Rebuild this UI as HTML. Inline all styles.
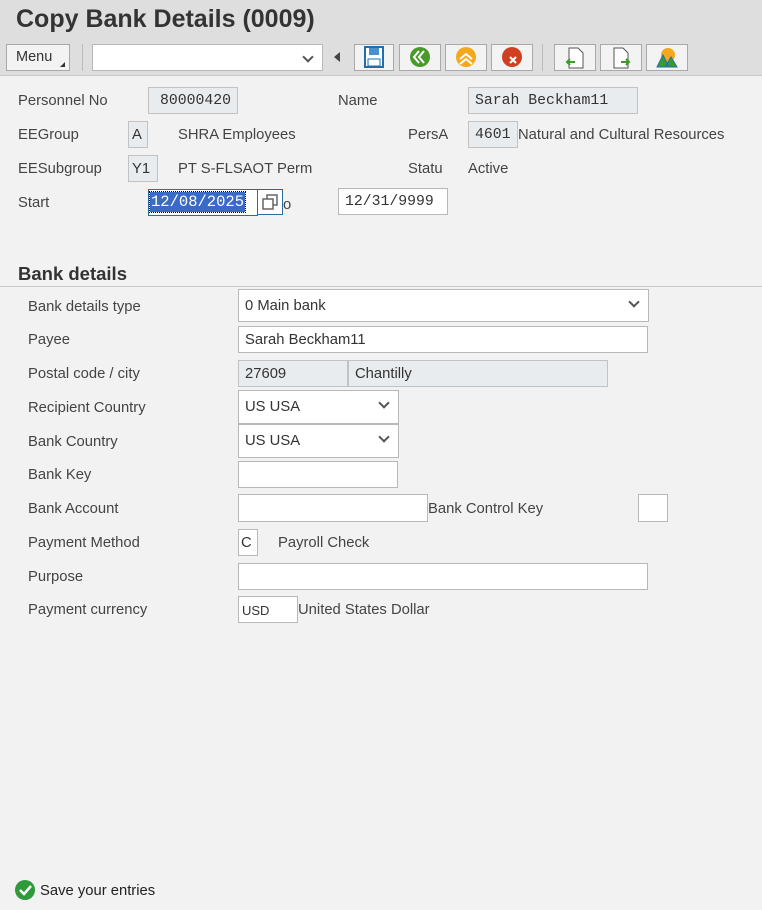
<!DOCTYPE html>
<html><head><meta charset="utf-8"><style>
*{box-sizing:border-box;margin:0;padding:0}
body{width:762px;height:910px;background:#f2f2f2;font-family:"Liberation Sans",Arial,sans-serif;font-size:14.8px;color:#333;position:relative;overflow:hidden}
.a{position:absolute}
.hdr{left:0;top:0;width:762px;height:76px;background:#dedede;border-bottom:1px solid #c8c8c8}
.t{left:16px;top:5px;font-size:25px;font-weight:bold;color:#333}
.btn{background:#f3f3f3;border:1px solid #a9a9a9;height:27px;top:44px}
.in{background:#fff;border:1px solid #b8b8b8;height:27px;padding:5px 6px;font-size:14.8px}
.ro{background:#e9ecee;border:1px solid #c2c2c2;height:27px;padding:5px 6px;font-size:14.8px}
.mono{font-family:"Liberation Mono",monospace}
.lbl{font-size:14.8px;color:#444}
.dd::after{content:"";position:absolute;right:10px;top:8px;width:6px;height:6px;border-right:2px solid #555;border-bottom:2px solid #555;transform:rotate(45deg)}
</style></head><body>
<div class="a hdr"></div>
<div class="a t">Copy Bank Details (0009)</div>
<div class="a btn" style="left:6px;width:64px;padding:4px 9px;font-size:14.5px">Menu<span style="position:absolute;right:4px;bottom:3px;border-left:5px solid transparent;border-bottom:5px solid #333"></span></div>
<div class="a" style="left:82px;top:44px;width:1px;height:27px;background:#bbb"></div>
<div class="a in dd" style="left:92px;top:44px;width:231px;height:27px"></div>
<div class="a" style="left:334px;top:52px;border-right:6px solid #444;border-top:5px solid transparent;border-bottom:5px solid transparent"></div>
<div class="a btn" style="left:354px;width:40px"><svg width="38" height="25"><rect x="10" y="2" width="18" height="20" fill="#fff" stroke="#1f6fb0" stroke-width="2"/><rect x="14" y="3" width="10" height="7" fill="#4a90d0"/><rect x="13" y="14" width="12" height="7" fill="#fff" stroke="#1f6fb0"/></svg></div>
<div class="a btn" style="left:399px;width:42px"><svg width="40" height="25"><circle cx="20" cy="12" r="10" fill="#4a9a2a"/><path d="M24 6l-5 6 5 6M19 6l-5 6 5 6" stroke="#fff" stroke-width="2" fill="none"/></svg></div>
<div class="a btn" style="left:445px;width:42px"><svg width="40" height="25"><circle cx="20" cy="12" r="10" fill="#f4a81d"/><path d="M14 14l6-5 6 5M14 19l6-5 6 5" stroke="#fff" stroke-width="2" fill="none"/></svg></div>
<div class="a btn" style="left:491px;width:42px"><svg width="40" height="25"><circle cx="20" cy="12" r="10" fill="#d04020"/><path d="M18 12l6 6M24 12l-6 6" stroke="#fff" stroke-width="2"/></svg></div>
<div class="a" style="left:542px;top:44px;width:1px;height:27px;background:#bbb"></div>
<div class="a btn" style="left:554px;width:42px"><svg width="40" height="25"><path d="M14 3h9l5 5v15H14z" fill="#fff" stroke="#555"/><path d="M20 17h-8M15 14l-3 3 3 3" stroke="#3a9a2a" stroke-width="2" fill="none"/></svg></div>
<div class="a btn" style="left:600px;width:42px"><svg width="40" height="25"><path d="M13 3h9l5 5v15H13z" fill="#fff" stroke="#555"/><path d="M20 17h8M25 14l3 3-3 3" stroke="#3a9a2a" stroke-width="2" fill="none"/></svg></div>
<div class="a btn" style="left:646px;width:42px"><svg width="40" height="25"><circle cx="21" cy="10" r="7" fill="#f4a81d"/><path d="M10 22l6-12 6 12zM18 22l6-10 6 10z" fill="#3a9a2a" stroke="#1f6fb0"/></svg></div>

<div class="a lbl" style="left:18px;top:93px">Personnel No</div>
<div class="a ro mono" style="left:148px;top:87px;width:90px;text-align:right">80000420</div>
<div class="a lbl" style="left:338px;top:93px">Name</div>
<div class="a ro mono" style="left:468px;top:87px;width:170px">Sarah Beckham11</div>

<div class="a lbl" style="left:18px;top:127px">EEGroup</div>
<div class="a ro" style="left:128px;top:121px;width:20px;padding:5px 3px">A</div>
<div class="a lbl" style="left:178px;top:127px">SHRA Employees</div>
<div class="a lbl" style="left:408px;top:127px">PersA</div>
<div class="a ro mono" style="left:468px;top:121px;width:50px">4601</div>
<div class="a lbl" style="left:518px;top:127px">Natural and Cultural Resources</div>

<div class="a lbl" style="left:18px;top:161px">EESubgroup</div>
<div class="a ro" style="left:128px;top:155px;width:30px;padding:5px 3px">Y1</div>
<div class="a lbl" style="left:178px;top:161px">PT S-FLSAOT Perm</div>
<div class="a lbl" style="left:408px;top:161px">Statu</div>
<div class="a lbl" style="left:468px;top:161px">Active</div>

<div class="a lbl" style="left:18px;top:195px">Start</div>
<div class="a in mono" style="left:148px;top:189px;width:110px;border:1px solid #2a6aa0;padding:3px 1px"><span style="background:#3a6ac8;color:#fff;outline:1px dotted #000;font-size:15.5px;padding:1px 1px">12/08/2025</span></div>
<div class="a" style="left:257px;top:189px;width:26px;height:26px;border:1px solid #2a6aa0;background:#fff"><svg width="24" height="24"><rect x="5" y="9" width="10" height="10" fill="none" stroke="#666" stroke-width="1.5"/><path d="M9 9V5h10v10h-4" fill="none" stroke="#666" stroke-width="1.5"/></svg></div>
<div class="a lbl" style="left:283px;top:197px">o</div>
<div class="a in mono" style="left:338px;top:188px;width:110px">12/31/9999</div>

<div class="a" style="left:18px;top:263px;font-size:18.5px;font-weight:bold;color:#333">Bank details</div>
<div class="a" style="left:0;top:286px;width:762px;height:1px;background:#c8c8c8"></div>

<div class="a lbl" style="left:28px;top:299px">Bank details type</div>
<div class="a in dd" style="left:238px;top:289px;width:411px;height:33px;padding:8px 6px">0 Main bank</div>
<div class="a lbl" style="left:28px;top:332px">Payee</div>
<div class="a in" style="left:238px;top:326px;width:410px">Sarah Beckham11</div>
<div class="a lbl" style="left:28px;top:366px">Postal code / city</div>
<div class="a ro" style="left:238px;top:360px;width:110px">27609</div>
<div class="a ro" style="left:348px;top:360px;width:260px">Chantilly</div>
<div class="a lbl" style="left:28px;top:400px">Recipient Country</div>
<div class="a in dd" style="left:238px;top:390px;width:161px;height:34px;padding:8px 6px">US USA</div>
<div class="a lbl" style="left:28px;top:434px">Bank Country</div>
<div class="a in dd" style="left:238px;top:424px;width:161px;height:34px;padding:8px 6px">US USA</div>
<div class="a lbl" style="left:28px;top:467px">Bank Key</div>
<div class="a in" style="left:238px;top:461px;width:160px"></div>
<div class="a lbl" style="left:28px;top:501px">Bank Account</div>
<div class="a in" style="left:238px;top:494px;width:190px;height:28px"></div>
<div class="a lbl" style="left:428px;top:501px">Bank Control Key</div>
<div class="a in" style="left:638px;top:494px;width:30px;height:28px"></div>
<div class="a lbl" style="left:28px;top:535px">Payment Method</div>
<div class="a in" style="left:238px;top:529px;width:20px;padding:5px 2px">C</div>
<div class="a lbl" style="left:278px;top:535px">Payroll Check</div>
<div class="a lbl" style="left:28px;top:569px">Purpose</div>
<div class="a in" style="left:238px;top:563px;width:410px"></div>
<div class="a lbl" style="left:28px;top:602px">Payment currency</div>
<div class="a in" style="left:238px;top:596px;width:60px;font-size:13px;padding:6px 3px">USD</div>
<div class="a lbl" style="left:298px;top:602px">United States Dollar</div>

<div class="a" style="left:15px;top:880px"><svg width="21" height="21"><circle cx="10" cy="10" r="10" fill="#2e9a3a"/><path d="M5 10l4 4 7-8" stroke="#fff" stroke-width="2.5" fill="none"/></svg></div>
<div class="a" style="left:40px;top:883px;font-size:14.8px;color:#222">Save your entries</div>
</body></html>
